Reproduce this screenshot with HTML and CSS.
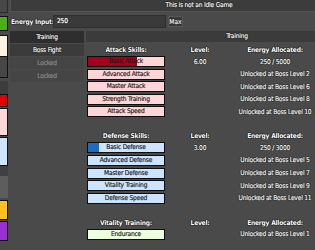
FILE: index.html
```html
<!doctype html>
<html lang="en">
<head>
    <meta charset="UTF-8">
    <title>This is not an Idle Game</title>
    <link rel="stylesheet" href="styles.css">
</head>
<body>
<div class="page">
    <aside class="side">
        <div class="blk blk-top"></div>
        <div class="blk blk-green"></div>
        <div class="blk blk-cream"></div>
        <div class="blk blk-dark"></div>
        <div class="blk blk-shade"></div>
        <div class="blk blk-red"></div>
        <div class="blk blk-pink"></div>
        <div class="blk blk-blue"></div>
        <div class="blk blk-shade2"></div>
        <div class="blk blk-gray"></div>
        <div class="blk blk-yellow"></div>
        <div class="blk blk-purple"></div>
    </aside>
    <div class="main">
        <div class="titlebar">This is not an Idle Game</div>
        <div class="energy">
            <span class="lbl">Energy Input:</span>
            <div class="energy-box">250</div>
            <button class="max">Max</button>
        </div>
        <div class="content">
            <nav class="tabs">
                <div class="tab active">Training</div>
                <div class="tab">Boss Fight</div>
                <div class="tab locked">Locked</div>
                <div class="tab locked">Locked</div>
            </nav>
            <section class="panel">
                <div class="panel-head">Training</div>

                <div class="group">
                    <div class="row head"><span class="lbl">Attack Skills:</span><span class="lbl">Level:</span><span class="lbl">Energy Allocated:</span></div>
                    <div class="row"><div class="skill atk"><span class="fill" style="width:64%"></span><span class="name">Basic Attack</span></div><span>6.00</span><span>250 / 5000</span></div>
                    <div class="row"><div class="skill atk"><span class="name">Advanced Attack</span></div><span></span><span>Unlocked at Boss Level 2</span></div>
                    <div class="row"><div class="skill atk"><span class="name">Master Attack</span></div><span></span><span>Unlocked at Boss Level 6</span></div>
                    <div class="row"><div class="skill atk"><span class="name">Strength Training</span></div><span></span><span>Unlocked at Boss Level 8</span></div>
                    <div class="row"><div class="skill atk"><span class="name">Attack Speed</span></div><span></span><span>Unlocked at Boss Level 10</span></div>
                </div>

                <div class="group">
                    <div class="row head"><span class="lbl">Defense Skills:</span><span class="lbl">Level:</span><span class="lbl">Energy Allocated:</span></div>
                    <div class="row"><div class="skill def"><span class="fill" style="width:15%"></span><span class="name">Basic Defense</span></div><span>3.00</span><span>250 / 3000</span></div>
                    <div class="row"><div class="skill def"><span class="name">Advanced Defense</span></div><span></span><span>Unlocked at Boss Level 5</span></div>
                    <div class="row"><div class="skill def"><span class="name">Master Defense</span></div><span></span><span>Unlocked at Boss Level 7</span></div>
                    <div class="row"><div class="skill def"><span class="name">Vitality Training</span></div><span></span><span>Unlocked at Boss Level 9</span></div>
                    <div class="row"><div class="skill def"><span class="name">Defense Speed</span></div><span></span><span>Unlocked at Boss Level 11</span></div>
                </div>

                <div class="group">
                    <div class="row head"><span class="lbl">Vitality Training:</span><span class="lbl">Level:</span><span class="lbl">Energy Allocated:</span></div>
                    <div class="row"><div class="skill vit"><span class="name">Endurance</span></div><span></span><span>Unlocked at Boss Level 1</span></div>
                </div>
            </section>
        </div>
    </div>
</div>
</body>
</html>
```

FILE: styles.css
```css
* {margin: 0; padding: 0; box-sizing: border-box;}
html, body {overflow: hidden;}
body {background: #4a4a4a; color: #fff; font-family: "DejaVu Sans Condensed", "Liberation Sans", sans-serif; font-size: 6.6px; letter-spacing: -0.2px; white-space: nowrap; -webkit-text-stroke: 0.15px;}
.page {display: flex; gap: 2px; width: 388px; height: 250px;}

/* sidebar, only its right edge shows */
.side {width: 8px; flex: none; display: flex; flex-direction: column;}
.blk {border: 1px solid #111; border-left: 0;}
.blk-top {height: 13px; background: #484848; border-color: #2c2c2c; border-top: 0;}
.blk-green {height: 15px; margin-top: 3px; background: #4caf12;}
.blk-cream {height: 22px; margin-top: 4px; background: #fff3dd;}
.blk-dark {height: 21px; background: #474747; border-top: 0;}
.blk-shade {height: 13px; margin-top: 3px; background: #3d3d3d; border: 0;}
.blk-red {height: 13px; background: #e30000;}
.blk-pink {height: 28px; margin-top: 1px; background: #ffd6d6;}
.blk-blue {height: 29px; margin-top: 1px; background: #cfe5ff;}
.blk-shade2 {height: 10px; background: #404040; border: 0;}
.blk-gray {height: 22px; background: #5d5d5d; border: 0;}
.blk-yellow {height: 20px; margin-top: 2px; background: #ffbf1f;}
.blk-purple {height: 20px; margin-top: 1px; background: #9a2fd6;}

.main {flex: 1; display: flex; flex-direction: column;}
.lbl {font-weight: bold; -webkit-text-stroke: 0;}
.titlebar, .lbl, .max, .tab, .panel-head, .row > span {text-shadow: 0 0 1px #000, 0 0 1px #000, 0 0 1px #000;}

.titlebar {height: 12px; line-height: 11px; text-align: center; background: #3c3c3c; border: 1px solid #545454; border-top: 0;}

.energy {display: flex; align-items: center; height: 13px; margin-top: 3px;}
.energy .lbl {width: 43px; padding-left: 1px;}
.energy-box {width: 113px; height: 13px; line-height: 11px; padding-left: 3px; background: #3a3a3a; border: 1px solid #2e2e2e;}
.max {width: 15px; height: 11px; margin-left: 2px; font: inherit; color: #fff; background: #3a3a3a; border: 1px solid #585858;}

.content {display: flex; gap: 2px; margin-top: 3px;}
.tabs {width: 74px; flex: none; display: flex; flex-direction: column; gap: 1px;}
.tab {height: 12px; line-height: 12px; text-align: center; background: #3b3b3b;}
.tab.active {background: #2e2e2e;}
.tab.locked {background: #454545; color: #8c8c8c; text-shadow: none;}

.panel {flex: 1;}
.panel-head {height: 11px; line-height: 11px; text-align: center; background: #3b3b3b;}

.group {padding: 4px 0 0 1px; margin-bottom: 11px;}
.row {display: grid; grid-template-columns: 78px 70px 80px; align-items: center; text-align: center; height: 11px; margin-bottom: 1.6px;}
.row.head {height: 8px; margin-bottom: 2px;}

.skill {position: relative; height: 11px; line-height: 9px; color: #1b1b1b; border: 1px solid #0d0d0d;}
.skill .fill {position: absolute; left: 0; top: 0; bottom: 0;}
.skill .name {position: relative;}
.atk {background: #ffd6d8;}
.atk .fill {background: #a6001c;}
.def {background: #cce4ff;}
.def .fill {background: #1a6cc4;}
.vit {background: #ecffde;}
```
